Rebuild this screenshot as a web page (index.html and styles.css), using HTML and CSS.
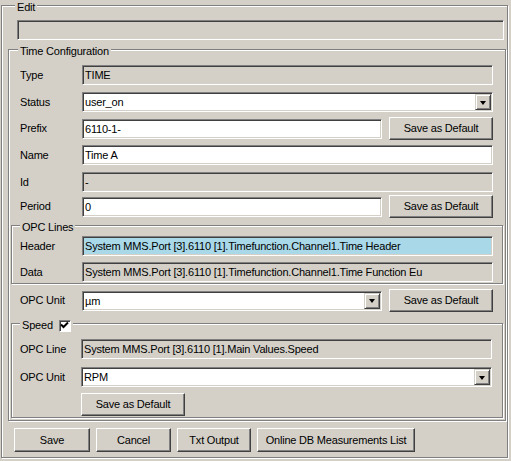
FILE: index.html
```html
<!DOCTYPE html>
<html>
<head>
<meta charset="utf-8">
<link rel="stylesheet" href="styles.css">
</head>
<body>
<div class="page">
  <div class="group edit">
    <div class="legend">Edit</div>
    <div class="field ro edit-field"></div>

    <div class="group timecfg">
      <div class="legend">Time Configuration</div>

      <div class="row r-type"><span class="lbl">Type</span><div class="field ro wide">TIME</div></div>
      <div class="row r-status"><span class="lbl">Status</span><div class="field select wide"><span class="val">user_on</span><span class="drop"><span class="arrow"></span></span></div></div>
      <div class="row btnrow r-prefix"><span class="lbl">Prefix</span><div class="field short">6110-1-</div><button class="btn def">Save as Default</button></div>
      <div class="row r-name"><span class="lbl">Name</span><div class="field wide">Time A</div></div>
      <div class="row r-id"><span class="lbl">Id</span><div class="field ro wide">-</div></div>
      <div class="row btnrow r-period"><span class="lbl">Period</span><div class="field short">0</div><button class="btn def">Save as Default</button></div>

      <div class="group sub opc">
        <div class="legend">OPC Lines</div>
        <div class="row r-header"><span class="lbl">Header</span><div class="field hl wide">System MMS.Port [3].6110 [1].Timefunction.Channel1.Time Header</div></div>
        <div class="row r-data"><span class="lbl">Data</span><div class="field ro wide">System MMS.Port [3].6110 [1].Timefunction.Channel1.Time Function Eu</div></div>
      </div>

      <div class="row btnrow r-unit"><span class="lbl">OPC Unit</span><div class="field select short"><span class="val">µm</span><span class="drop"><span class="arrow"></span></span></div><button class="btn def">Save as Default</button></div>

      <div class="group sub speed">
        <div class="legend">Speed <span class="check"><svg width="9" height="9" viewBox="0 0 9 9"><path d="M1 3.5 L3.5 6 L8 1.5" fill="none" stroke="#000" stroke-width="2"/></svg></span></div>
        <div class="row r-line"><span class="lbl">OPC Line</span><div class="field ro wide">System MMS.Port [3].6110 [1].Main Values.Speed</div></div>
        <div class="row r-unit2"><span class="lbl">OPC Unit</span><div class="field select wide"><span class="val">RPM</span><span class="drop"><span class="arrow"></span></span></div></div>
        <div class="row btnrow r-save"><span class="lbl"></span><button class="btn def">Save as Default</button></div>
      </div>
    </div>

    <div class="actions">
      <button class="btn b-save">Save</button>
      <button class="btn b-cancel">Cancel</button>
      <button class="btn b-txt">Txt Output</button>
      <button class="btn b-online">Online DB Measurements List</button>
    </div>
  </div>
</div>
</body>
</html>
```
FILE: styles.css
```css
html, body {
  margin: 0;
  padding: 0;
  background: #d4d0c8;
}
body {
  width: 511px;
  height: 461px;
  overflow: hidden;
  font-family: "Liberation Sans", Arial, sans-serif;
  font-size: 11px;
  line-height: 13px;
  letter-spacing: -0.2px;
  color: #000;
}
.page {
  padding: 5px 0 0 1px;
}

/* etched group box */
.group {
  box-sizing: border-box;
  border: 1px solid #808080;
  box-shadow: inset 1px 1px 0 #fff, 1px 1px 0 #fff;
}
.legend {
  width: fit-content;
  height: 13px;
  margin-top: -5px;
  padding: 0 2px;
  background: #d4d0c8;
  white-space: nowrap;
  display: flex;
  align-items: center;
}

.edit {
  width: 507px;
  height: 453px;
}
.edit > .legend { margin-left: 13px; }
.edit-field {
  margin: 6px 0 0 15px;
  width: 487px;
}

.timecfg {
  margin: 9px 0 0 6px;
  width: 498px;
  height: 372px;
  padding-left: 11px;
}
.timecfg > .legend { margin-left: -2px; }

.sub {
  margin-left: -9px;
  width: 492px;
  padding-left: 8px;
}
.sub > .legend { margin-left: 0; }
.opc { margin-top: 7px; height: 59px; }
.speed { margin-top: 11px; height: 95px; }

/* rows */
.row {
  display: flex;
  align-items: center;
  height: 20px;
}
.row.btnrow { height: 23px; }
.lbl {
  flex: none;
  width: 62px;
  white-space: nowrap;
}
.speed .lbl { width: 61px; }

.r-type { margin-top: 7px; }
.r-status { margin-top: 7px; }
.r-prefix { margin-top: 5px; }
.r-name { margin-top: 5px; }
.r-id { margin-top: 7px; }
.r-period { margin-top: 3px; }
.r-header { margin-top: 2px; }
.r-data { margin-top: 6px; }
.r-unit { margin-top: 5px; }
.r-line { margin-top: 7px; }
.r-unit2 { margin-top: 8px; }
.r-save { margin-top: 6px; }

/* sunken field */
.field {
  box-sizing: border-box;
  height: 20px;
  border: 1px solid;
  border-color: #808080 #fff #fff #808080;
  box-shadow: inset 1px 1px 0 #404040, inset -1px -1px 0 #d4d0c8;
  background: #fff;
  padding: 3px 0 0 2px;
  white-space: nowrap;
  overflow: hidden;
  flex: none;
}
.field.ro { background: #d4d0c8; }
.field.hl { background: #a9d8e8; }
.wide { width: 411px; }
.short { width: 300px; }

.select {
  display: flex;
  padding: 1px 1px 1px 2px;
}
.select .val {
  flex: 1;
  padding-top: 2px;
}
.drop {
  flex: none;
  width: 16px;
  height: 16px;
  box-sizing: border-box;
  border: 1px solid;
  border-color: #d4d0c8 #404040 #404040 #d4d0c8;
  box-shadow: inset 1px 1px 0 #fff, inset -1px -1px 0 #808080;
  background: #d4d0c8;
  display: flex;
  align-items: center;
  justify-content: center;
}
.arrow {
  width: 0;
  height: 0;
  border-left: 3.5px solid transparent;
  border-right: 3.5px solid transparent;
  border-top: 4px solid #000;
  margin-top: 1px;
}

/* raised button */
.btn {
  box-sizing: border-box;
  height: 23px;
  margin: 0;
  padding: 0;
  border: 1px solid;
  border-color: #fff #404040 #404040 #fff;
  box-shadow: inset -1px -1px 0 #808080, inset 1px 1px 0 #d4d0c8;
  background: #d4d0c8;
  font: inherit;
  letter-spacing: inherit;
  color: #000;
  white-space: nowrap;
  flex: none;
}
.btn.def { width: 104px; margin-left: 7px; }
.r-save .btn.def { margin-left: 0; }

.check {
  display: inline-flex;
  align-items: center;
  justify-content: center;
  box-sizing: border-box;
  width: 12px;
  height: 12px;
  margin-left: 6px;
  border: 1px solid;
  border-color: #808080 #fff #fff #808080;
  box-shadow: inset 1px 1px 0 #404040;
  background: #fff;
}

.actions {
  display: flex;
  gap: 6px;
  margin: 7px 0 0 12px;
}
.actions .btn { height: 24px; }
.b-save { width: 76px; }
.b-cancel { width: 75px; }
.b-txt { width: 74px; }
.b-online { width: 158px; }
```
